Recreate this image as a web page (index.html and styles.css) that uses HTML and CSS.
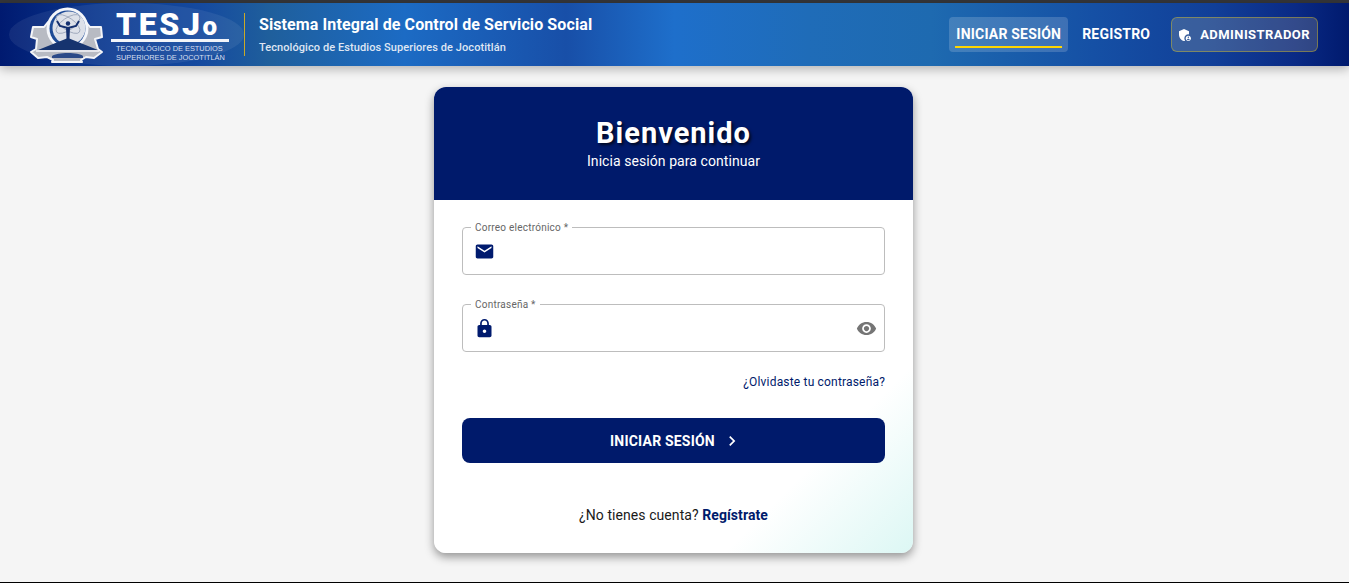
FILE: index.html
```html
<!DOCTYPE html>
<html lang="es">
<head>
<meta charset="utf-8">
<title>Iniciar sesión</title>
<link rel="stylesheet" href="styles.css">
</head>
<body>
<div class="top-strip"></div>
<header class="app-bar">
  <div class="brand">
    <div class="logo">
      <svg class="logo-mark" width="78" height="61" viewBox="28 5 78 61">
        <path d="M33 27h11l4-5h38l4 5h11l1 10-7 2 3 10 4 3-8 6-8-1-5 3 1 2H52l1-2-6-3-9 1-7-6 5-3 1-10-6-2z" fill="#b8bbc3" stroke="#f4f5f8" stroke-width="2" stroke-linejoin="round"/>
        <circle cx="67.500" cy="28.500" r="21" fill="#f4f6fa"/>
        <circle cx="67.500" cy="28.500" r="18" fill="#1d4a96"/>
        <circle cx="69" cy="28" r="16.500" fill="#dde1e9"/>
        <ellipse cx="68" cy="24" rx="14" ry="6" fill="none" stroke="#98a2b6" stroke-width=".8" transform="rotate(35 68 24)"/>
        <ellipse cx="68" cy="24" rx="14" ry="6" fill="none" stroke="#98a2b6" stroke-width=".8" transform="rotate(-35 68 24)"/>
        <path d="M57 21l3 5 8 2 8-2 3-5" fill="none" stroke="#14306f" stroke-width="2"/>
        <path d="M66 27h4l-.5 12h-3z" fill="#14306f"/>
        <circle cx="68" cy="23.500" r="2.200" fill="#14306f"/>
        <path d="M38 50l30-12 30 12z" fill="#16346f"/>
        <path d="M36 51h63" stroke="#f4f5f8" stroke-width="1.500"/>
        <path d="M52 56c5-4 27-4 31 0v2H52z" fill="#2b4a88"/>
      </svg>
      <div class="wordmark">
        <div class="wordmark-title">TESJ<span class="wordmark-o">o</span></div>
        <div class="wordmark-sub">TECNOLÓGICO DE ESTUDIOS<br>SUPERIORES DE JOCOTITLÁN</div>
      </div>
    </div>
    <div class="brand-text">
      <div class="brand-title">Sistema Integral de Control de Servicio Social</div>
      <div class="brand-sub">Tecnológico de Estudios Superiores de Jocotitlán</div>
    </div>
  </div>
  <nav class="nav">
    <a class="nav-item nav-active"><span class="nav-label">INICIAR SESIÓN</span></a>
    <a class="nav-item"><span class="nav-label">REGISTRO</span></a>
    <a class="nav-admin">
      <svg width="16" height="16" viewBox="0 0 24 24"><path d="M17 11c.34 0 .67.04 1 .09V6.270L10.500 3 3 6.270v4.910c0 4.540 3.200 8.790 7.500 9.820.55-.13 1.080-.32 1.600-.55C11.410 19.470 11 18.280 11 17c0-3.310 2.690-6 6-6z" fill="#fff"/><path d="M17 13c-2.210 0-4 1.790-4 4s1.790 4 4 4 4-1.790 4-4-1.790-4-4-4zm0 1.400c.62 0 1.120.51 1.120 1.120s-.51 1.120-1.120 1.120-1.120-.51-1.120-1.120.5-1.120 1.120-1.120zm0 5.370c-.93 0-1.740-.46-2.240-1.170.05-.72 1.510-1.080 2.240-1.080s2.190.36 2.240 1.080c-.5.710-1.310 1.170-2.240 1.170z" fill="#fff"/></svg>
      <span>ADMINISTRADOR</span>
    </a>
  </nav>
</header>
<main class="page">
  <section class="card">
    <div class="card-head">
      <h1 class="card-title">Bienvenido</h1>
      <p class="card-sub">Inicia sesión para continuar</p>
    </div>
    <form class="card-body">
      <fieldset class="field">
        <legend class="field-legend">Correo electrónico *</legend>
        <svg class="field-icon" width="21" height="21" viewBox="0 0 24 24"><path d="M20 4H4c-1.100 0-1.990.9-1.990 2L2 18c0 1.100.9 2 2 2h16c1.100 0 2-.9 2-2V6c0-1.100-.9-2-2-2zm0 4-8 5-8-5V6l8 5 8-5v2z" fill="#001a6e"/></svg>
      </fieldset>
      <fieldset class="field field-password">
        <legend class="field-legend">Contraseña *</legend>
        <svg class="field-icon" width="21" height="21" viewBox="0 0 24 24"><path d="M18 8h-1V6c0-2.760-2.240-5-5-5S7 3.240 7 6v2H6c-1.100 0-2 .9-2 2v10c0 1.100.9 2 2 2h12c1.100 0 2-.9 2-2V10c0-1.100-.9-2-2-2zm-6 9c-1.100 0-2-.9-2-2s.9-2 2-2 2 .9 2 2-.9 2-2 2zm3.100-9H8.900V6c0-1.710 1.390-3.100 3.100-3.100 1.710 0 3.100 1.390 3.100 3.100v2z" fill="#001a6e"/></svg>
        <svg class="field-eye" width="21" height="21" viewBox="0 0 24 24"><path d="M12 4.500C7 4.500 2.730 7.610 1 12c1.730 4.390 6 7.500 11 7.500s9.270-3.110 11-7.500c-1.730-4.390-6-7.500-11-7.500zM12 17c-2.760 0-5-2.240-5-5s2.240-5 5-5 5 2.240 5 5-2.240 5-5 5zm0-8c-1.660 0-3 1.340-3 3s1.340 3 3 3 3-1.340 3-3-1.340-3-3-3z" fill="#757575"/></svg>
      </fieldset>
      <a class="forgot">¿Olvidaste tu contraseña?</a>
      <button class="submit" type="button">
        <span>INICIAR SESIÓN</span>
        <svg width="20" height="20" viewBox="0 0 24 24"><path d="M10 6 8.590 7.410 13.170 12l-4.580 4.590L10 18l6-6z" fill="#fff"/></svg>
      </button>
      <p class="signup">¿No tienes cuenta? <a class="signup-link">Regístrate</a></p>
    </form>
  </section>
</main>
<div class="bottom-strip"></div>
</body>
</html>
```
FILE: styles.css
```css
* { box-sizing: border-box; }
html, body { height: 100%; }
body {
  margin: 0;
  display: flex;
  flex-direction: column;
  height: 583px;
  overflow: hidden;
  background: #f5f5f5;
  font-family: Roboto, "Liberation Sans", sans-serif;
  color: #1a1a1a;
}
.top-strip { height: 3px; background: #35363a; flex: none; }
.bottom-strip { height: 1px; background: #000; flex: none; }

.app-bar {
  flex: none;
  height: 63px;
  display: flex;
  align-items: center;
  justify-content: space-between;
  padding: 0 31px 0 9px;
  background: linear-gradient(90deg, #001a70 0%, #0b3a92 8%, #154a9f 15%, #1f5f9c 20%, #1c6bc4 30%, #184fa8 42%, #1e6fcb 50%, #1f6cb8 60%, #1e6ab0 69%, #1550a5 81%, #113f98 90%, #0a2a85 96%, #001a6e 100%);
  box-shadow: 0 3px 10px rgba(0, 0, 0, .28);
  position: relative;
  z-index: 1;
}
.brand { display: flex; align-items: center; }
.logo {
  display: flex;
  align-items: flex-start;
  width: 235px;
  height: 63px;
  border-radius: 50%;
  background: rgba(255, 255, 255, .07);
  padding: 2px 0 0 19px;
  gap: 5px;
}
.logo-mark { flex: none; }
.wordmark { color: #fff; width: 118px; padding-top: 5px; }
.wordmark-title {
  font-family: Roboto, "Liberation Sans", sans-serif;
  font-weight: 900;
  font-size: 32px;
  line-height: 29px;
  letter-spacing: 2.600px;
  padding-left: 5px;
  border-bottom: 3px solid #f2f4f9;
  height: 32px;
  white-space: nowrap;
}
.wordmark-o { font-size: 26px; }
.wordmark-sub {
  font-family: "Liberation Sans", sans-serif;
  font-size: 7.400px;
  line-height: 9.500px;
  padding: 1.500px 0 0 5px;
  color: #d7dfef;
  white-space: nowrap;
}
.brand-text {
  border-left: 1px solid #c9a928;
  height: 43px;
  padding-left: 14px;
  padding-top: 2px;
  display: flex;
  flex-direction: column;
  justify-content: center;
  gap: 7px;
}
.brand-title { color: #fff; font-size: 16px; font-weight: 700; line-height: 18px; letter-spacing: .1px; }
.brand-sub { color: #dfe6f3; font-size: 11px; font-weight: 500; line-height: 14px; letter-spacing: .08px; }

.nav { display: flex; align-items: center; }
.nav-item {
  color: #fff;
  font-size: 14px;
  font-weight: 700;
  letter-spacing: .2px;
  height: 35px;
  padding: 0 6px;
  border-radius: 4px;
  margin-right: 7px;
  display: block;
}
.nav-active { background: rgba(255, 255, 255, .17); }
.nav-label { display: block; height: 31px; line-height: 34px; padding: 0 1px; }
.nav-active .nav-label { border-bottom: 2px solid #ffd600; }
.nav-admin {
  display: flex;
  align-items: center;
  gap: 7px;
  height: 35px;
  margin-left: 7px;
  padding: 0 7px 0 5px;
  border: 1px solid rgba(255, 214, 0, .35);
  border-radius: 6px;
  background: rgba(255, 240, 170, .17);
  color: #fff;
  font-size: 13px;
  font-weight: 700;
  letter-spacing: .43px;
}

.page { flex: 1; display: flex; justify-content: center; padding: 21px 2px 0 0; min-height: 0; }
.card {
  width: 479px;
  height: 466px;
  border-radius: 12px;
  overflow: hidden;
  background: linear-gradient(135deg, #fff 0%, #fff 80%, #dcf7f4 100%);
  box-shadow: 0 4px 10px rgba(0, 0, 0, .4);
}
.card-head {
  height: 113px;
  background: #001a6b;
  color: #fff;
  text-align: center;
  padding-top: 29px;
}
.card-title {
  margin: 0;
  font-size: 29px;
  line-height: 34px;
  font-weight: 700;
  letter-spacing: 1px;
  text-shadow: 2px 2px 3px rgba(0, 0, 0, .7);
}
.card-sub { margin: 3px 0 0; font-size: 14px; line-height: 16px; letter-spacing: .07px; }
.card-body { padding: 20px 28px 0; }
.field {
  position: relative;
  margin: 0 0 22px;
  padding: 0 0 0 8px;
  height: 55px;
  border: 1px solid #bdbdbd;
  border-radius: 4px;
}
.field-password { margin-bottom: 0; }
.field-legend {
  padding: 2px 4px 0;
  font-size: 10px;
  line-height: 12px;
  color: #666;
  letter-spacing: .23px;
}
.field-icon { position: absolute; left: 11px; top: 7px; }
.field-eye { position: absolute; right: 7px; top: 7px; }
.forgot {
  display: block;
  margin-top: 23px;
  text-align: right;
  font-size: 12px;
  line-height: 15px;
  letter-spacing: .18px;
  color: #001a6b;
}
.submit {
  display: flex;
  align-items: center;
  justify-content: center;
  gap: 7px;
  width: 100%;
  height: 45px;
  margin-top: 28px;
  padding: 0 0 0 5px;
  border: 0;
  border-radius: 8px;
  background: #001a6b;
  color: #fff;
  font-family: inherit;
  font-size: 14px;
  font-weight: 700;
  letter-spacing: .2px;
}
.signup { margin: 44px 0 0; text-align: center; font-size: 14px; line-height: 17px; letter-spacing: .07px; color: #1a1a1a; }
.signup-link { color: #001a6b; font-weight: 700; }
```
